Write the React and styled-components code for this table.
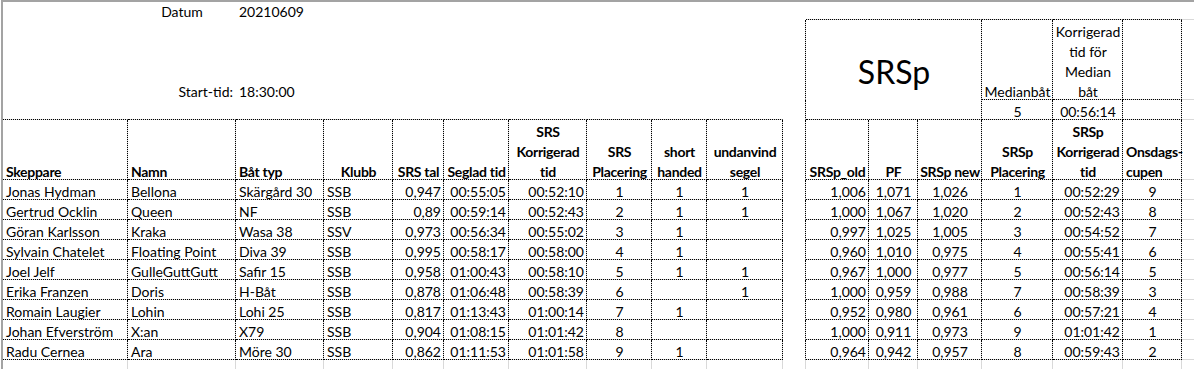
import React from 'react';
import styled, { createGlobalStyle } from 'styled-components';

const GlobalStyle = createGlobalStyle`
  html, body {
    margin: 0;
    padding: 0;
    background: #fff;
    overflow: hidden;
  }
  body {
    font-family: Lato, 'Liberation Sans', Arial, sans-serif;
    font-size: 14px;
    color: #000;
  }
`;

// column widths in px: A..J left table, K gap, L..Q SRSp table, R spare
const COLS = [125, 108, 88, 69, 51, 65, 78, 65, 55, 76, 23, 63, 49, 64, 71, 70, 59, 80];
const ROWS = [18, 80, 20, 60, 20, 20, 20, 20, 20, 20, 20, 20, 20, 20];

const GRID_GRAY = '#d9d9d9';

const LINE = {
  dot: '1px dotted #000',
  grid: `1px solid ${GRID_GRAY}`,
  none: '1px solid transparent',
};

const FLEX_ALIGN = { left: 'flex-start', center: 'center', right: 'flex-end' };

// faint gridline showing between the dots of a dotted border
const underlay = ({ $r, $b }) => {
  const layers = [];
  if ($r === 'dot') layers.push(`linear-gradient(${GRID_GRAY}, ${GRID_GRAY}) right top / 1px 100% no-repeat`);
  if ($b === 'dot') layers.push(`linear-gradient(${GRID_GRAY}, ${GRID_GRAY}) left bottom / 100% 1px no-repeat`);
  return layers.length ? layers.join(', ') : 'none';
};

const Sheet = styled.div`
  display: grid;
  grid-template-columns: ${COLS.map((w) => `${w}px`).join(' ')};
  grid-template-rows: ${ROWS.map((h) => `${h}px`).join(' ')};
  width: max-content;
  margin-left: 1px;
  border-top: 2px solid #a3a3a3;
  border-left: 2px solid #a3a3a3;
`;

const Cell = styled.div`
  grid-column: ${({ $col, $span = 1 }) => `${$col} / span ${$span}`};
  grid-row: ${({ $row, $rspan = 1 }) => `${$row} / span ${$rspan}`};
  display: flex;
  flex-direction: column;
  justify-content: ${({ $valign }) => ($valign === 'center' ? 'center' : 'flex-end')};
  align-items: ${({ $align = 'left' }) => FLEX_ALIGN[$align]};
  text-align: ${({ $align = 'left' }) => $align};
  padding: 0 2px 0 3px;
  min-width: 0;
  border-right: ${({ $r }) => LINE[$r]};
  border-bottom: ${({ $b }) => LINE[$b]};
  background: ${underlay};
  background-origin: border-box;
  font-weight: ${({ $bold }) => ($bold ? 700 : 400)};
  letter-spacing: ${({ $bold }) => ($bold ? '-0.3px' : 'normal')};
`;

const Text = styled.span`
  display: block;
  white-space: pre;
  line-height: 20px;
  margin-bottom: -3px;
`;

const BigTitle = styled.span`
  font-size: 32px;
  padding-top: 4px;
`;

const headers = [
  'Skeppare', 'Namn', 'Båt typ', 'Klubb', 'SRS tal', 'Seglad tid',
  'SRS\nKorrigerad\ntid', 'SRS\nPlacering', 'short\nhanded', 'undanvind\nsegel',
  'SRSp_old', 'PF', 'SRSp new', 'SRSp\nPlacering', 'SRSp\nKorrigerad\ntid', 'Onsdags-\ncupen',
];
const headerAlign = [
  'left', 'left', 'left', 'center', 'center', 'center', 'center', 'center', 'center', 'center',
  'center', 'center', 'center', 'center', 'center', 'left',
];
const dataAlign = [
  'left', 'left', 'left', 'left', 'right', 'right', 'right', 'center', 'center', 'center',
  'right', 'center', 'center', 'center', 'right', 'center',
];

const results = [
  ['Jonas Hydman', 'Bellona', 'Skärgård 30', 'SSB', '0,947', '00:55:05', '00:52:10', '1', '1', '1', '1,006', '1,071', '1,026', '1', '00:52:29', '9'],
  ['Gertrud Ocklin', 'Queen', 'NF', 'SSB', '0,89', '00:59:14', '00:52:43', '2', '1', '1', '1,000', '1,067', '1,020', '2', '00:52:43', '8'],
  ['Göran Karlsson', 'Kraka', 'Wasa 38', 'SSV', '0,973', '00:56:34', '00:55:02', '3', '1', '', '0,997', '1,025', '1,005', '3', '00:54:52', '7'],
  ['Sylvain Chatelet', 'Floating Point', 'Diva 39', 'SSB', '0,995', '00:58:17', '00:58:00', '4', '1', '', '0,960', '1,010', '0,975', '4', '00:55:41', '6'],
  ['Joel Jelf', 'GulleGuttGutt', 'Safir 15', 'SSB', '0,958', '01:00:43', '00:58:10', '5', '1', '1', '0,967', '1,000', '0,977', '5', '00:56:14', '5'],
  ['Erika Franzen', 'Doris', 'H-Båt', 'SSB', '0,878', '01:06:48', '00:58:39', '6', '', '1', '1,000', '0,959', '0,988', '7', '00:58:39', '3'],
  ['Romain Laugier', 'Lohin', 'Lohi 25', 'SSB', '0,817', '01:13:43', '01:00:14', '7', '1', '', '0,952', '0,980', '0,961', '6', '00:57:21', '4'],
  ['Johan Efverström', 'X:an', 'X79', 'SSB', '0,904', '01:08:15', '01:01:42', '8', '', '', '1,000', '0,911', '0,973', '9', '01:01:42', '1'],
  ['Radu Cernea', 'Ara', 'Möre 30', 'SSB', '0,862', '01:11:53', '01:01:58', '9', '1', '', '0,964', '0,942', '0,957', '8', '00:59:43', '2'],
];

// table columns skip the gap column K (11)
const tableCols = [1, 2, 3, 4, 5, 6, 7, 8, 9, 10, 12, 13, 14, 15, 16, 17];

const top = {
  '1-2': { text: 'Datum', align: 'center' },
  '1-3': { text: '20210609' },
  '2-2': { text: 'Start-tid:', align: 'right' },
  '2-3': { text: '18:30:00' },
  '2-15': { text: 'Medianbåt', align: 'center' },
  '2-16': { text: 'Korrigerad\ntid för\nMedian\nbåt', align: 'center' },
  '3-15': { text: '5', align: 'center' },
  '3-16': { text: '00:56:14', align: 'center' },
};

function borders(r, c) {
  if (r === 14 || c === 18) return { r: 'grid', b: 'grid' };
  if (c === 11) return { r: r >= 2 ? 'dot' : 'none', b: 'none' };
  if (r >= 4) return { r: 'dot', b: 'dot' };
  if (c <= 10) return { r: 'none', b: r === 3 ? 'dot' : 'none' };
  if (r === 1) return { r: 'none', b: 'dot' };
  return { r: 'dot', b: 'dot' };
}

function content(r, c) {
  if (r === 4) {
    const i = tableCols.indexOf(c);
    if (i >= 0) return { text: headers[i], align: headerAlign[i], bold: true };
  }
  if (r >= 5 && r <= 13) {
    const i = tableCols.indexOf(c);
    if (i >= 0) return { text: results[r - 5][i], align: dataAlign[i] };
  }
  return top[`${r}-${c}`] || null;
}

const App = () => {
  const cells = [];

  for (let r = 1; r <= ROWS.length; r++) {
    for (let c = 1; c <= COLS.length; c++) {
      // merged SRSp title block covers L..N, rows 2..3
      if (r >= 2 && r <= 3 && c >= 12 && c <= 14) {
        if (r === 2 && c === 12) {
          cells.push(
            <Cell key="title" $row={2} $rspan={2} $col={12} $span={3} $r="dot" $b="dot" $align="center" $valign="center">
              <BigTitle>SRSp</BigTitle>
            </Cell>
          );
        }
        continue;
      }
      const b = borders(r, c);
      const item = content(r, c);
      cells.push(
        <Cell key={`${r}-${c}`} $row={r} $col={c} $r={b.r} $b={b.b} $align={item?.align} $bold={item?.bold}>
          {item?.text ? <Text>{item.text}</Text> : null}
        </Cell>
      );
    }
  }

  return (
    <>
      <GlobalStyle />
      <Sheet>{cells}</Sheet>
    </>
  );
};

export default App;
